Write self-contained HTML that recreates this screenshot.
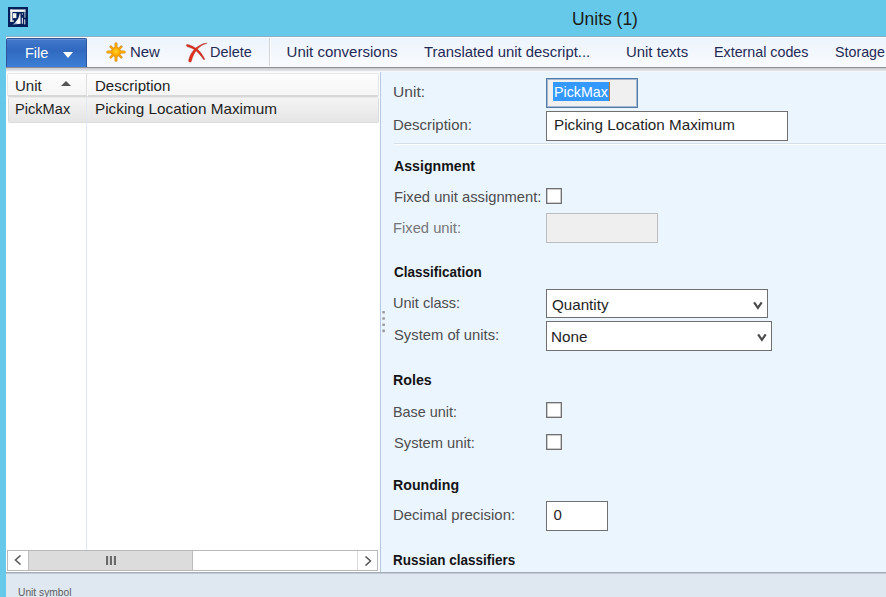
<!DOCTYPE html>
<html><head><meta charset="utf-8">
<style>
*{box-sizing:border-box;margin:0;padding:0}
html,body{width:886px;height:597px;overflow:hidden;background:#66c9e9;font-family:"Liberation Sans",sans-serif;font-size:16px;color:#1e1e1e}
.abs{position:absolute}
.t{position:absolute;white-space:nowrap;line-height:1;transform-origin:0 0}
#win{left:6px;top:36px;width:880px;height:561px;background:#fff}
#tb{left:6px;top:36px;width:880px;height:31px;background:linear-gradient(#8fb0c2 0,#8fb0c2 1px,#f8fbfe 1px,#f8fbfe 2px,#edf4fc 2px,#f9fbfe)}
#tbb{left:6px;top:67px;width:880px;height:6px;background:linear-gradient(#8c9096 0,#8c9096 1px,#c6cace 1px,#dfe2e6 3.5px,#f4f6f8 4px,#fbfcfd 6px)}
#file{left:6px;top:38px;width:81px;height:29px;background:linear-gradient(#4279cb,#3069bf 40%,#3471c7 60%,#3c7ed6);border-radius:2px 2px 0 0;border:1px solid #2c559c;border-bottom:none;box-shadow:inset 0 1px 0 rgba(255,255,255,0.18)}
.sep{position:absolute;width:2px;background:linear-gradient(90deg,#d2d6da 1px,#fff 1px)}
#grid{left:6px;top:73px;width:374px;height:500px;background:#fff}
#form{left:381px;top:72px;width:505px;height:500px;background:#ebf5fe}
#vline{left:380px;top:72px;width:1px;height:500px;background:#b4c8e0}
#status{left:6px;top:572px;width:880px;height:25px;background:linear-gradient(#a3adb9 0,#a3adb9 1px,#c3cbd5 1px,#c3cbd5 2px,#dfe7f0 2px)}
.box{position:absolute;background:#fff;border:1px solid #707070}
.cb{position:absolute;width:16px;height:16px;background:#fff;border:1px solid #707070;box-shadow:inset 0 0 0 0.5px #9a9a9a}
</style></head><body>
<svg class="abs" style="left:8px;top:7px" width="20" height="20" viewBox="0 0 20 20">
<defs><linearGradient id="ig" x1="0" y1="1" x2="0.8" y2="0.2"><stop offset="0" stop-color="#3a5090"/><stop offset="0.55" stop-color="#fff"/><stop offset="1" stop-color="#e8e8f0"/></linearGradient></defs>
<rect width="20" height="20" fill="#03205a"/>
<rect x="2.3" y="2.5" width="15.1" height="2.4" fill="#fbfbfb"/>
<rect x="2.3" y="2.5" width="2.1" height="12.2" fill="#f6f6f6"/>
<rect x="2.3" y="13.4" width="3.7" height="1.3" fill="#e8e8e8"/>
<rect x="16.4" y="2.5" width="1" height="8.2" fill="#c8ccd8"/>
<rect x="5" y="6.2" width="3.4" height="4.9" fill="#f4f4f4"/>
<path d="M4 17.8 C6 16.2 8.4 14.6 10.2 11.4 C11 9.6 11.4 7.8 11.7 6.4 L12.4 6.6 L12.7 16.8 Z" fill="url(#ig)"/>
<rect x="13.8" y="6.4" width="1.2" height="1.1" fill="#d8dce8"/>
<rect x="13.8" y="10.7" width="1.2" height="6.1" fill="#d0d4e0"/>
<rect x="16.1" y="12.4" width="1.2" height="5" fill="#c8ccd8"/>
</svg>
<div id="win" class="abs"></div>
<div id="tb" class="abs"></div>
<div id="tbb" class="abs"></div>
<div id="file" class="abs"></div>
<svg class="abs" style="left:63px;top:52px" width="10" height="6"><path d="M0 0 L10 0 L5 6 Z" fill="#fff"/></svg>
<svg class="abs" style="left:104px;top:40px" width="24" height="24" viewBox="0 0 24 24">
<defs><radialGradient id="sg" cx="0.5" cy="0.45" r="0.55"><stop offset="0" stop-color="#ffd63a"/><stop offset="0.6" stop-color="#ffb400"/><stop offset="1" stop-color="#f29c00"/></radialGradient></defs>
<g stroke="#d88c18" stroke-linecap="round">
<line x1="12" y1="3.8000000000000007" x2="12" y2="20.2" stroke-width="3.0"/><line x1="3.8000000000000007" y1="12" x2="20.2" y2="12" stroke-width="3.0"/>
<line x1="6.63" y1="6.63" x2="17.37" y2="17.37" stroke-width="2.4"/><line x1="17.37" y1="6.63" x2="6.63" y2="17.37" stroke-width="2.4"/>
</g>
<circle cx="12" cy="12" r="5" fill="#d88c18"/>
<g stroke="#f8aa00" stroke-linecap="round">
<line x1="12" y1="3.8000000000000007" x2="12" y2="20.2" stroke-width="1.8"/><line x1="3.8000000000000007" y1="12" x2="20.2" y2="12" stroke-width="1.8"/>
<line x1="6.63" y1="6.63" x2="17.37" y2="17.37" stroke-width="1.3"/><line x1="17.37" y1="6.63" x2="6.63" y2="17.37" stroke-width="1.3"/>
</g>
<circle cx="12" cy="12" r="4.3" fill="url(#sg)"/>
</svg>
<svg class="abs" style="left:182px;top:38px" width="28" height="26" viewBox="-1 -0.8 28 26">
<path d="M3.8 5.6 C7 5.8 11 8 14.2 10.2 C17.2 12.6 19.8 16.4 21.7 20.2 C21.5 21 20.9 21.1 20.5 20.6 C18.4 17.6 16 14.6 13 12 C10.4 10 7.2 8.6 4.4 8 C3.4 7.4 3.3 6.2 3.8 5.6 Z" fill="#dd2a1a" stroke="#a83828" stroke-width="0.45"/>
<path d="M23.7 4.7 C20 5.6 17 7.6 14.4 10.2 C11.8 13.2 9.8 16.8 8.3 22.6 C7.7 23.6 5.8 23.6 5.6 22.2 C6 18.6 7.8 14.6 10.6 11.4 C14 7.6 18.6 5 23.6 4.3 Z" fill="#e2301c" stroke="#a83828" stroke-width="0.45"/>
</svg>
<div class="sep" style="left:269px;top:38px;height:28px"></div>

<div id="grid" class="abs"></div>
<div class="abs" style="left:7px;top:73px;width:372px;height:24px;background:linear-gradient(#fdfdfd,#f5f5f5);border:1px solid #e6e6e6;border-bottom:2px solid #d8d8d8;border-radius:2px"></div>
<div class="abs" style="left:86px;top:74px;width:2px;height:22px;background:linear-gradient(90deg,#dedede 1px,#fafafa 1px)"></div>
<svg class="abs" style="left:61px;top:81px" width="10" height="5"><path d="M0 5 L5 0 L10 5 Z" fill="#555"/></svg>
<div class="abs" style="left:8px;top:97px;width:371px;height:26px;background:linear-gradient(#f4f4f4,#e5e5e5);border:1px solid #dcdcdc;border-top-color:#e8e8e8;border-radius:2px"></div>
<div class="abs" style="left:86px;top:98px;width:1px;height:452px;background:#dde8f4"></div>
<div class="abs" style="left:7px;top:550px;width:371px;height:21px;background:#fff;border:1px solid #b9b9b9"></div>
<div class="abs" style="left:28px;top:551px;width:165px;height:19px;background:#dcdcdc;border-left:1px solid #bcbcbc;border-right:1px solid #bcbcbc"></div>
<div class="abs" style="left:357px;top:551px;width:1px;height:19px;background:#dcdcdc"></div>
<svg class="abs" style="left:14px;top:555px" width="8" height="10"><path d="M6.5 0.5 L1.5 5 L6.5 9.5" stroke="#555" stroke-width="1.5" fill="none"/></svg>
<svg class="abs" style="left:364px;top:555.5px" width="8" height="10"><path d="M1.5 0.5 L6.5 5 L1.5 9.5" stroke="#555" stroke-width="1.5" fill="none"/></svg>
<svg class="abs" style="left:106px;top:556px" width="11" height="9"><rect x="0" y="0" width="2.1" height="9" fill="#6a6a6a"/><rect x="3.9" y="0" width="2.1" height="9" fill="#6a6a6a"/><rect x="7.9" y="0" width="2.1" height="9" fill="#6a6a6a"/></svg>

<div id="vline" class="abs"></div>
<div id="form" class="abs"></div>
<div class="abs" style="left:546px;top:78px;width:92px;height:30px;background:#f0f0f0;border:1px solid #5579a6;box-shadow:inset 0 0 0 1px #a4b8d2"></div>
<div class="abs" style="left:553px;top:82px;width:56px;height:19px;background:#3399ff"></div>
<div class="abs" style="left:608.5px;top:82px;width:1px;height:19px;background:#c07830"></div>
<div class="box" style="left:546px;top:111px;width:242px;height:30px"></div>
<div class="abs" style="left:394px;top:143px;width:492px;height:2px;background:linear-gradient(#d6dee6 1px,#fbfdff 1px)"></div>
<div class="cb" style="left:546px;top:188px"></div>
<div class="abs" style="left:546px;top:213px;width:112px;height:30px;background:#efefef;border:1px solid #bdbdbd"></div>
<div class="box" style="left:546px;top:289px;width:222px;height:29px"></div>
<svg class="abs" style="left:753px;top:300.5px" width="10" height="9"><path d="M1.1 1.4 L4.9 6.8 L8.7 1.4" stroke="#4a4a4a" stroke-width="2.2" fill="none"/></svg>
<div class="box" style="left:546px;top:321px;width:226px;height:30px"></div>
<svg class="abs" style="left:757px;top:333px" width="10" height="9"><path d="M1.1 1.4 L4.9 6.8 L8.7 1.4" stroke="#4a4a4a" stroke-width="2.2" fill="none"/></svg>
<svg class="abs" style="left:382px;top:311px" width="4" height="22"><g fill="#9c9c9c"><rect x="0.3" y="0" width="2.6" height="2.6" rx="0.6"/><rect x="0.3" y="6.2" width="2.6" height="2.6" rx="0.6"/><rect x="0.3" y="12.4" width="2.6" height="2.6" rx="0.6"/><rect x="0.3" y="18.6" width="2.6" height="2.6" rx="0.6"/></g></svg>
<div class="cb" style="left:546px;top:402px"></div>
<div class="cb" style="left:546px;top:434px"></div>
<div class="box" style="left:546px;top:501px;width:62px;height:30px"></div>
<div id="status" class="abs"></div>
<div class="t" style="left:572.43px;top:9.76px;font-size:18px;color:#1a1a1a;transform:scaleX(0.9695);">Units (1)</div>
<div class="t" style="left:24.53px;top:45.40px;font-size:15px;color:#ffffff;transform:scaleX(0.9681);">File</div>
<div class="t" style="left:129.60px;top:44.20px;font-size:15px;color:#1f2a55;transform:scaleX(0.9974);">New</div>
<div class="t" style="left:209.54px;top:44.30px;font-size:15px;color:#1f2a55;transform:scaleX(0.9639);">Delete</div>
<div class="t" style="left:286.60px;top:43.90px;font-size:15px;color:#1f2a55;">Unit conversions</div>
<div class="t" style="left:424.00px;top:43.90px;font-size:15px;color:#1f2a55;transform:scaleX(0.9899);">Translated unit descript...</div>
<div class="t" style="left:626.41px;top:43.90px;font-size:15px;color:#1f2a55;transform:scaleX(0.9931);">Unit texts</div>
<div class="t" style="left:714.05px;top:43.90px;font-size:15px;color:#1f2a55;transform:scaleX(0.9517);">External codes</div>
<div class="t" style="left:835.20px;top:43.90px;font-size:15px;color:#1f2a55;transform:scaleX(0.9503);">Storage</div>
<div class="t" style="left:14.60px;top:77.60px;font-size:15px;color:#1e1e1e;transform:scaleX(1.0035);">Unit</div>
<div class="t" style="left:94.70px;top:77.70px;font-size:15px;color:#1e1e1e;transform:scaleX(1.0029);">Description</div>
<div class="t" style="left:14.63px;top:101.10px;font-size:15px;color:#1e1e1e;transform:scaleX(0.9737);">PickMax</div>
<div class="t" style="left:94.68px;top:101.00px;font-size:15px;color:#1e1e1e;transform:scaleX(1.0197);">Picking Location Maximum</div>
<div class="t" style="left:393.16px;top:84.30px;font-size:15px;color:#4d4d4d;transform:scaleX(1.0392);">Unit:</div>
<div class="t" style="left:553.75px;top:84.00px;font-size:15px;color:#ffffff;transform:scaleX(0.9488);">PickMax</div>
<div class="t" style="left:393.20px;top:116.80px;font-size:15px;color:#4d4d4d;transform:scaleX(0.9970);">Description:</div>
<div class="t" style="left:553.59px;top:116.50px;font-size:15px;color:#1e1e1e;transform:scaleX(1.0141);">Picking Location Maximum</div>
<div class="t" style="left:393.60px;top:158.20px;font-size:15px;color:#141414;font-weight:700;transform:scaleX(0.9435);">Assignment</div>
<div class="t" style="left:393.52px;top:189.30px;font-size:15px;color:#4d4d4d;transform:scaleX(0.9824);">Fixed unit assignment:</div>
<div class="t" style="left:393.12px;top:219.50px;font-size:15px;color:#767676;transform:scaleX(0.9831);">Fixed unit:</div>
<div class="t" style="left:394.00px;top:264.20px;font-size:15px;color:#141414;font-weight:700;transform:scaleX(0.8997);">Classification</div>
<div class="t" style="left:393.13px;top:294.50px;font-size:15px;color:#4d4d4d;transform:scaleX(0.9699);">Unit class:</div>
<div class="t" style="left:551.50px;top:296.90px;font-size:15px;color:#1e1e1e;transform:scaleX(1.0113);">Quantity</div>
<div class="t" style="left:394.00px;top:326.90px;font-size:15px;color:#4d4d4d;transform:scaleX(0.9854);">System of units:</div>
<div class="t" style="left:551.28px;top:329.10px;font-size:15px;color:#1e1e1e;transform:scaleX(1.0198);">None</div>
<div class="t" style="left:393.05px;top:371.70px;font-size:15px;color:#141414;font-weight:700;transform:scaleX(0.9492);">Roles</div>
<div class="t" style="left:393.14px;top:403.50px;font-size:15px;color:#4d4d4d;transform:scaleX(0.9606);">Base unit:</div>
<div class="t" style="left:394.10px;top:434.60px;font-size:15px;color:#4d4d4d;transform:scaleX(0.9796);">System unit:</div>
<div class="t" style="left:393.06px;top:476.90px;font-size:15px;color:#141414;font-weight:700;transform:scaleX(0.9446);">Rounding</div>
<div class="t" style="left:393.00px;top:507.10px;font-size:15px;color:#4d4d4d;transform:scaleX(0.9969);">Decimal precision:</div>
<div class="t" style="left:553.50px;top:507.10px;font-size:15px;color:#1e1e1e;">0</div>
<div class="t" style="left:393.10px;top:551.70px;font-size:15px;color:#141414;font-weight:700;transform:scaleX(0.8992);">Russian classifiers</div>
<div class="t" style="left:18.00px;top:587.09px;font-size:11px;color:#5c5c5c;transform:scaleX(0.9296);">Unit symbol</div>
</body></html>
